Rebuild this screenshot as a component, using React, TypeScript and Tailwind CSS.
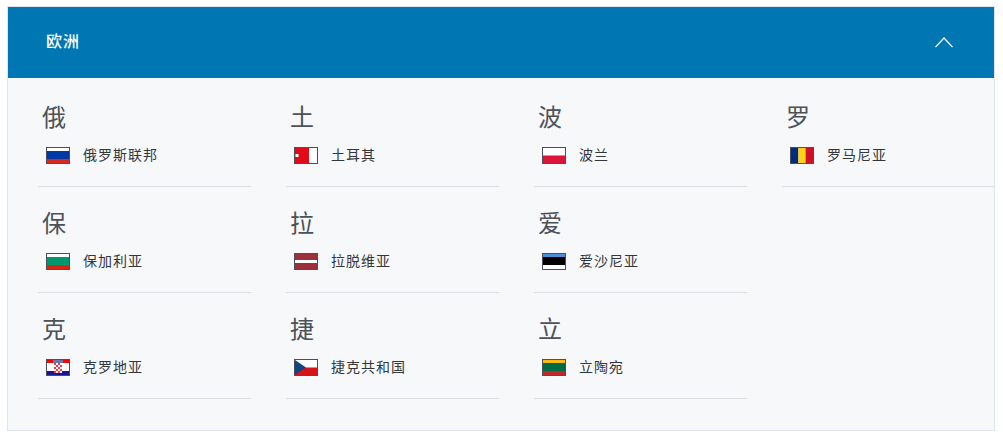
import React from "react";

const B = ({ children }: { children: React.ReactNode }) => (
  <svg width="24" height="17" viewBox="0 0 22 15" preserveAspectRatio="none" className="block shrink-0 border border-[#4a4f59] box-border">
    {children}
  </svg>
);
const Tri = ({ c }: { c: string[] }) => (
  <B>
    <rect width="22" height="3" fill={c[0]} />
    <rect y="3" width="22" height="8" fill={c[1]} />
    <rect y="11" width="22" height="4" fill={c[2]} />
  </B>
);

const flags: Record<string, React.ReactNode> = {
  ru: <Tri c={["#ffffff", "#0039a6", "#d52b1e"]} />,
  tr: (
    <B>
      <rect width="22" height="15" fill="#ffffff" />
      <rect width="14" height="15" fill="#e30a17" />
      <rect x="0.5" y="6" width="3" height="3" fill="#ffffff" />
    </B>
  ),
  pl: (
    <B>
      <rect width="22" height="7.5" fill="#ffffff" />
      <rect y="7.5" width="22" height="7.5" fill="#dc143c" />
    </B>
  ),
  ro: (
    <B>
      <rect width="7.4" height="15" fill="#002b7f" />
      <rect x="7.3" width="7.4" height="15" fill="#fcd116" />
      <rect x="14.6" width="7.4" height="15" fill="#ce1126" />
    </B>
  ),
  bg: <Tri c={["#ffffff", "#00966e", "#d62612"]} />,
  lv: (
    <B>
      <rect width="22" height="15" fill="#9e3039" />
      <rect y="6" width="22" height="3" fill="#ffffff" />
    </B>
  ),
  ee: <Tri c={["#4891d9", "#000000", "#ffffff"]} />,
  hr: (
    <B>
      <rect width="22" height="15" fill="#ffffff" />
      <rect width="22" height="3" fill="#ff0000" />
      <rect y="11" width="22" height="4" fill="#171796" />
      <rect x="6" y="0" width="10" height="3" fill="#6b76a8" />
      <rect x="7" y="3" width="8" height="10" fill="#ffffff" />
      {[0, 1, 2, 3, 4].map((r) =>
        [0, 1, 2, 3].map((c) =>
          (r + c) % 2 === 0 ? <rect key={`${r}${c}`} x={7 + c * 2} y={3 + r * 2} width="2" height="2" fill="#ee3a44" /> : null
        )
      )}
    </B>
  ),
  cz: (
    <B>
      <rect width="22" height="7.5" fill="#ffffff" />
      <rect y="7.5" width="22" height="7.5" fill="#d7141a" />
      <path d="M0 0L11 7.5L0 15Z" fill="#11457e" />
    </B>
  ),
  lt: <Tri c={["#fdb913", "#006a44", "#c1272d"]} />,
};

const columns = [
  [
    ["俄", "俄罗斯联邦", "ru"],
    ["保", "保加利亚", "bg"],
    ["克", "克罗地亚", "hr"],
  ],
  [
    ["土", "土耳其", "tr"],
    ["拉", "拉脱维亚", "lv"],
    ["捷", "捷克共和国", "cz"],
  ],
  [
    ["波", "波兰", "pl"],
    ["爱", "爱沙尼亚", "ee"],
    ["立", "立陶宛", "lt"],
  ],
  [["罗", "罗马尼亚", "ro"]],
];

const font = "font-['Noto_Sans_CJK_SC','Noto_Sans',sans-serif]";

export default function App() {
  return (
    <div className={`bg-white w-[1003px] h-[441px] pt-[6px] pl-[7px] ${font}`}>
      <div className="w-[988px] h-[425px] box-border border border-[#dfe3ee] bg-[#f7f8fa]">
        <div className="h-[71px] bg-[#0077b3] flex items-center justify-between pl-[38px] pr-[40px]">
          <span className="text-white text-[16px] font-medium tracking-[1px] leading-none mb-[6px]">欧洲</span>
          <svg width="20" height="12" viewBox="0 0 20 12" fill="none" stroke="#ffffff" strokeWidth="1.2" className="mb-[2px]">
            <path d="M1.5 11.2L10 2L18.5 11.2" />
          </svg>
        </div>
        <div className="grid grid-cols-[repeat(4,213px)] gap-x-[35px] pl-[30px] pt-[3px]">
          {columns.map((col, i) => (
            <div key={i} className="flex flex-col">
              {col.map(([letter, name, code]) => (
                <div key={code} className="h-[106px] box-border border-b border-[#dcdee2]">
                  <div className="pl-[4px] pt-[17px] h-[36px] box-content text-[24px] leading-[36px] text-[#4d5158]">{letter}</div>
                  <div className="flex items-center pl-[8px] mt-[13px] h-[17px]">
                    {flags[code]}
                    <span className="ml-[13px] mb-[2px] text-[14px] tracking-[1px] leading-[17px] text-[#33363b]">{name}</span>
                  </div>
                </div>
              ))}
            </div>
          ))}
        </div>
      </div>
    </div>
  );
}
